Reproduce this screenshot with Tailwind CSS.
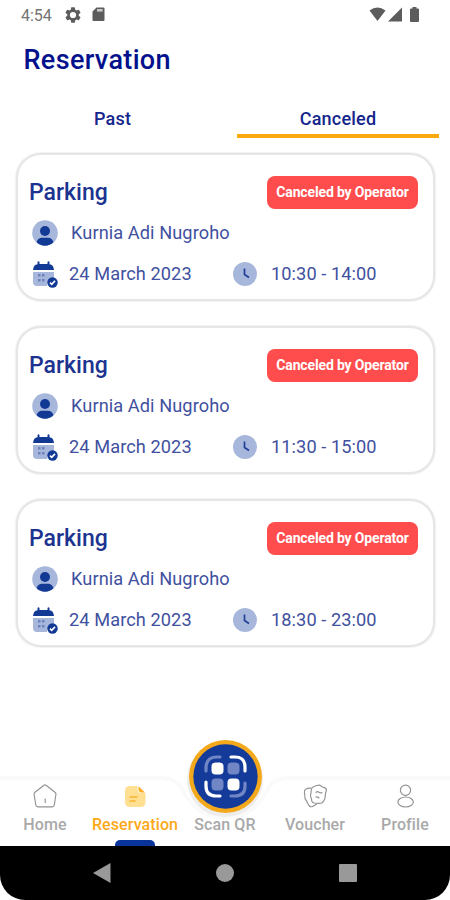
<!DOCTYPE html>
<html lang="en">
<head>
<meta charset="utf-8">
<title>Reservation</title>
<script src="https://cdn.jsdelivr.net/npm/@tailwindcss/browser@4"></script>
</head>
<body class="bg-white">
<div class="w-[450px] h-[900px] overflow-hidden flex flex-col bg-white font-['Roboto',sans-serif] text-[#0b1f8a]">
  <header class="h-[30px] shrink-0 flex items-center pl-[21px] pr-[31px] pb-px text-[#5c5c5c]">
    <span class="w-[45px] pt-[2px] text-[16px] leading-[30px] whitespace-nowrap text-[#757575]">4:54</span>
    <svg class="w-[16px] h-[16px] -ml-px" viewBox="2 2 20 20" fill="currentColor"><path d="M19.14 12.94a7 7 0 0 0 0-1.88l2.03-1.58a.5.5 0 0 0 .12-.61l-1.92-3.32a.5.5 0 0 0-.59-.22l-2.39.96a7 7 0 0 0-1.62-.94l-.36-2.54a.5.5 0 0 0-.48-.41h-3.84a.5.5 0 0 0-.47.41l-.36 2.54c-.59.24-1.13.57-1.62.94l-2.39-.96a.5.5 0 0 0-.59.22L2.74 8.870a.5.5 0 0 0 .12.61l2.03 1.58a7 7 0 0 0 0 1.88l-2.03 1.58a.5.5 0 0 0-.12.61l1.92 3.32c.12.22.37.29.59.22l2.39-.96c.5.38 1.03.7 1.62.94l.36 2.54c.05.24.24.41.48.41h3.84c.24 0 .44-.17.47-.41l.36-2.54c.59-.24 1.13-.56 1.62-.94l2.39.96c.22.08.47 0 .59-.22l1.92-3.32a.5.5 0 0 0-.12-.61zM12 15.9a3.9 3.9 0 1 1 0-7.8 3.9 3.9 0 0 1 0 7.8z"/></svg>
    <svg class="w-[13px] h-[15px] ml-[11px]" viewBox="0 0 13 15" fill="currentColor"><path fill-rule="evenodd" d="M4.500.5H11.500Q12.500.5 12.500 1.500V13Q12.500 14 11.500 14H1.500Q.5 14 .5 13V4.500ZM5 2V4.500H10.500V2Z"/><path d="M5 2H10.500V4.500H5Z" opacity=".35"/></svg>
    <svg class="w-[17px] h-[15px] ml-auto" viewBox="0 0 17 15" fill="currentColor"><path d="M.5 3.600Q8.500-2.800 16.500 3.600L8.500 14Z"/></svg>
    <svg class="w-[15px] h-[15px] ml-[2px]" viewBox="0 0 15 15" fill="currentColor"><path d="M0 14.500L14 .5V14.500Z"/></svg>
    <svg class="w-[9px] h-[15px] ml-[7px]" viewBox="0 0 9 15" fill="currentColor"><path d="M2.500 0H6.500V1.500H8Q9 1.500 9 2.500V14Q9 15 8 15H1Q0 15 0 14V2.500Q0 1.500 1 1.500H2.500Z"/></svg>
  </header>

  <h1 class="h-[60px] shrink-0 pl-[23.500px] text-[27px] leading-[60px] font-medium tracking-[0.35px] text-[#03118c]">Reservation</h1>

  <nav class="h-[48px] shrink-0 flex pl-[12px] pr-[11px] text-[18px] font-medium tracking-[0.200px] text-[#14258c]">
    <div class="w-[201px] h-[48px] leading-[57px] text-center">Past</div>
    <div class="w-[202px] ml-[24px] h-[48px] leading-[57px] text-center border-b-[4px] border-[#fba90d]">Canceled</div>
  </nav>

  <main id="cards" class="flex flex-col gap-[25px] pt-[15px] pl-[16px] grow"></main>

  <footer class="relative h-[70px] shrink-0 bg-white">
    <svg class="absolute left-0 -top-[42px] w-[450px] h-[112px]" viewBox="0 0 450 112">
      <g fill="none" stroke="#fafafa" stroke-width="4"><path d="M0 44H160Q175 44 181 53Q196 84 225 84T269 53Q275 44 290 44H450"/></g>
      <ellipse cx="225" cy="46" rx="38" ry="37" fill="#ededed"/>
      <circle cx="225.500" cy="42.500" r="36.500" fill="#f3a91b"/>
      <circle cx="225.500" cy="42.500" r="32.200" fill="#143b99"/>
      <g transform="translate(0 7)">
      <g fill="none" stroke-width="3.200" stroke-linecap="round">
        <path stroke="#7186c5" d="M206 30V27Q206 16 217 16H220M245 42V45Q245 55 235 55H231"/>
        <path stroke="#fff" d="M231 16H235Q245 16 245 26V30M206 41V45Q206 55 216 55H220"/>
      </g>
      <rect x="211.500" y="21.500" width="12" height="12" rx="4" fill="#fff"/>
      <rect x="227.500" y="21.500" width="12" height="12" rx="4" fill="#7186c5"/>
      <rect x="211.500" y="37.500" width="12" height="12" rx="4" fill="#7186c5"/>
      <rect x="227.500" y="37.500" width="12" height="12" rx="4" fill="#fff"/>
      </g>
    </svg>
    <div class="relative grid grid-cols-5 h-[70px] text-[16px] leading-[20px] font-medium text-[#a9a9a9] tracking-[0.1px] whitespace-nowrap">
      <div class="flex flex-col items-center pt-[7px]">
        <svg class="w-[26px] h-[26px]" viewBox="0 0 26 26" fill="none" stroke="#929292" stroke-width="1.150" stroke-linejoin="round" stroke-linecap="round"><path d="M12 2.200Q13 1.400 14 2.200L23 9.200Q24.200 10 23.900 11.500L22.300 22Q22 23.800 20.200 23.800H6Q4.100 23.800 3.800 22L2.100 11.500Q1.900 10 3 9.200ZM13.200 16V19.500"/></svg>
        <span class="mt-[6px]">Home</span>
      </div>
      <div class="flex flex-col items-center pt-[7px] text-[#fba91a]">
        <svg class="w-[26px] h-[26px]" viewBox="0 0 26 26"><path fill="#ffdf91" d="M8 3H15.500V6Q15.500 10 19 10H23.500V19Q23.500 24 18.500 24H8Q3 24 3 19V8Q3 3 8 3Z"/><path fill="#fbae25" d="M16.500 3.300V6.300Q16.500 9.500 19.500 9.500H23Z"/><path stroke="#f9b532" stroke-width="1.500" stroke-linecap="round" d="M8 14H15M8 18H13"/></svg>
        <span class="mt-[6px]">Reservation</span>
        <span class="mt-[5px] w-[40px] h-[6px] rounded-t-[5px] bg-[#09349a]"></span>
      </div>
      <div class="flex flex-col items-center pt-[39px]"><span>Scan QR</span></div>
      <div class="flex flex-col items-center pt-[7px]">
        <svg class="w-[26px] h-[26px]" viewBox="0 0 26 26" fill="none" stroke="#929292" stroke-width="1.150" stroke-linecap="round" stroke-linejoin="round"><path d="M12 3.500Q14 2.500 16 2.200Q18 2 19.500 3.400Q21 4.200 22.500 4.600Q24.800 5.600 24.300 8Q23.300 10 23.300 12Q23.300 14 22.700 16Q21.700 18.500 20 19.800Q18 20.800 16 20.200Q14 20 12.500 20Q10 19.800 9.700 17.500Q9.600 15.500 8.700 14Q8.200 12 9 10Q9.200 8 9.300 6.500Q9.800 4.200 12 3.500Z"/><path d="M9.200 5.200Q6 4.800 4 6Q2 7.200 2.400 9.500Q3.100 11.500 2.800 13.500Q2.700 15.500 4 17.200Q5.200 18.800 6 21Q7.300 24 9.800 23.700Q12.500 22.800 15 20.500M14 9.300Q15.700 8 17 9.300Q18.500 10.500 20 9.500M14 14Q15.500 13.600 17 15"/></svg>
        <span class="mt-[6px]">Voucher</span>
      </div>
      <div class="flex flex-col items-center pt-[7px]">
        <svg class="w-[26px] h-[26px]" viewBox="0 0 26 26" fill="none" stroke="#929292" stroke-width="1.200"><circle cx="13.500" cy="7.200" r="5.100"/><ellipse cx="13.600" cy="19" rx="7.700" ry="5"/></svg>
        <span class="mt-[6px]">Profile</span>
      </div>
    </div>
  </footer>

  <div class="h-[54px] shrink-0 bg-black rounded-b-[25px] flex items-center text-[#999]">
    <svg class="w-[18px] h-[20px] ml-[93px]" viewBox="0 0 18 20" fill="currentColor"><path d="M0 10L17.500 0V20Z"/></svg>
    <span class="w-[18px] h-[18px] rounded-full bg-[#999] ml-[105px]"></span>
    <span class="w-[18px] h-[18px] rounded-[1px] bg-[#999] ml-[105px]"></span>
  </div>
</div>
<script>
const card = time => `
<article class="w-[419px] h-[148px] rounded-[25px] border-2 border-[#e6e6e6] shadow-[0_0_1px_1px_#f1f1f1] bg-white pl-[11px] pr-[15px] text-[#3f519f]">
  <div class="flex justify-between pt-[21px] h-[57px]">
    <h2 class="text-[23px] leading-[34px] font-medium text-[#1c3490]">Parking</h2>
    <span class="w-[151px] h-[33px] rounded-[8px] bg-[#ff4d4d] text-white text-center text-[14px] leading-[33px] font-bold tracking-[-0.15px] whitespace-nowrap">Canceled by Operator</span>
  </div>
  <div class="flex items-center h-[41px] text-[18.200px] whitespace-nowrap">
    <svg class="w-[26px] h-[26px] ml-[3px]" viewBox="0 0 26 26"><circle cx="13" cy="13" r="12.800" fill="#a7b7dc"/><circle cx="13" cy="11" r="5" fill="#123a94"/><path fill="#123a94" d="M4.500 22Q6.500 17.700 10 17.800H16Q19.500 17.700 21.500 22Q18 25.800 13 25.800T4.500 22Z"/></svg>
    <span class="ml-[13px] pt-px tracking-[0.080px]">Kurnia Adi Nugroho</span>
  </div>
  <div class="flex items-center h-[41px] text-[18.200px] whitespace-nowrap">
    <svg class="w-[26px] h-[28px] ml-[3px]" viewBox="0 0 26 28"><path fill="#a7b7dc" d="M1 12H22V18Q16 18 15 26H5Q1 26 1 22Z"/><path fill="#123a94" d="M1 10Q1.500 4.500 5.500 4.200V2Q6.500.5 7.500 2V4H15.500V2Q16.500.5 17.500 2V4.200Q21.500 4.500 22 10Z"/><g fill="#6d82ba"><rect x="6" y="14" width="2.500" height="2.500"/><rect x="10" y="14" width="2.500" height="2.500"/><rect x="6" y="19" width="2.500" height="2.500"/><rect x="10" y="19" width="2.500" height="2.500"/></g><circle cx="20.500" cy="22.500" r="5.200" fill="#123a94"/><path d="M18 22.700L19.700 24.300L23 20.900" fill="none" stroke="#fff" stroke-width="1.600"/></svg>
    <span class="ml-[11px] pt-px w-[164px] tracking-[0.080px]">24 March 2023</span>
    <svg class="w-[24px] h-[24px]" viewBox="0 0 24 24"><circle cx="12" cy="12" r="12" fill="#a7b7dc"/><path d="M11.500 6.500V12.500L16 15.500" fill="none" stroke="#203f94" stroke-width="1.700"/></svg>
    <span class="ml-[14px] pt-px tracking-[0.080px]">${time}</span>
  </div>
</article>`;
document.getElementById('cards').innerHTML = ['10:30 - 14:00', '11:30 - 15:00', '18:30 - 23:00'].map(card).join('');
</script>
</body>
</html>
